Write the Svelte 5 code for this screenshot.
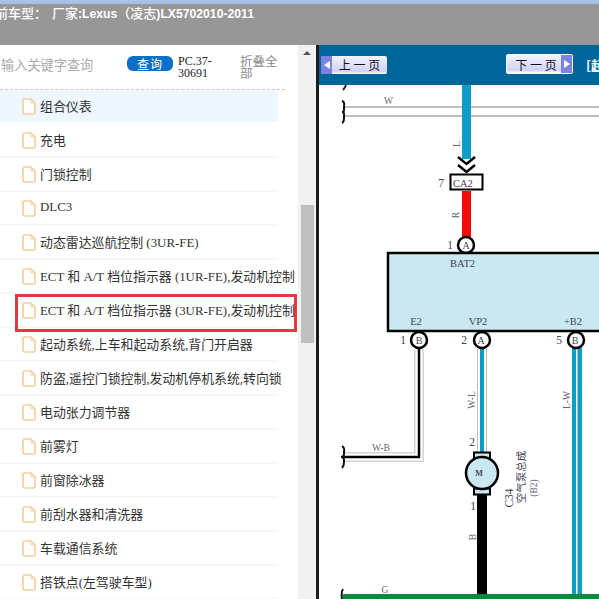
<script>
  const rows = [
    '组合仪表', '充电', '门锁控制', 'DLC3', '动态雷达巡航控制 (3UR-FE)',
    'ECT 和 A/T 档位指示器 (1UR-FE),发动机控制', 'ECT 和 A/T 档位指示器 (3UR-FE),发动机控制',
    '起动系统,上车和起动系统,背门开启器', '防盗,遥控门锁控制,发动机停机系统,转向锁',
    '电动张力调节器', '前雾灯', '前窗除冰器', '前刮水器和清洗器', '车载通信系统', '搭铁点(左驾驶车型)'
  ];
</script>

<div class="page">
  <header class="top">
    <div class="title"><span class="c">前车型：</span><span class="gap"></span><span class="c">厂家</span>:Lexus<span class="c">（凌志</span>)LX5702010-2011</div>
  </header>
  <div class="main">
    <aside class="left">
      <div class="search">
        <span class="kw">输入关键字查询</span>
        <span class="btn">查询</span>
        <span class="code">PC.37-30691</span>
        <span class="fold">折叠全部</span>
      </div>
      <ul class="list">
        {#each rows as r, i}
          <li class:active={i === 0} class:marked={i === 6}>
            <svg class="doc" width="14" height="17" viewBox="0 0 14 17">
              <path d="M1 2.500a1.500 1.500 0 0 1 1.500-1.500h6.500l4 4v9.500a1.500 1.500 0 0 1-1.500 1.500h-9a1.500 1.500 0 0 1-1.500-1.500z" fill="#fff" stroke="#f2cfa0" stroke-width="1.700"/>
              <path d="M9 1v4h4" fill="none" stroke="#f2cfa0" stroke-width="1"/>
            </svg>
            <span class="label">{r}</span>
          </li>
        {/each}
      </ul>
    </aside>
    <div class="scroll">
      <div class="arrow"></div>
      <div class="thumb"></div>
    </div>
    <section class="right">
      <div class="nav">
        <div class="pg prev"><span class="tip"><i class="l"></i></span><span class="t">上 一 页</span></div>
        <div class="pg next"><span class="t">下 一 页</span><span class="tip"><i class="r"></i></span></div>
        <span class="us"></span>
        <span class="cut">[起</span>
      </div>
      <svg class="dia" width="280" height="514" viewBox="319 85 280 514">
        <g fill="none">
          <path d="M346 85q-1 3-3 5" stroke="#222" stroke-width="2"/>
          <path d="M343 107H599M343 116H599" stroke="#a9a9a9" stroke-width="1.500"/>
          <path d="M342 101q3 1 2 5v4q0 2-2 2q2 0 2 2v4q0 4-2 5" stroke="#111" stroke-width="2"/>
          <rect x="462" y="85" width="9" height="74" fill="#0e9dc6"/>
          <path d="M458 157l8.500 7l8.500-7M458 165l8.500 7l8.500-7" stroke="#000" stroke-width="2.500"/>
          <rect x="450.500" y="174.500" width="32" height="15" fill="#fff" stroke="#000" stroke-width="2"/>
          <rect x="462" y="191" width="9" height="46" fill="#f00c0c"/>
          <circle cx="466" cy="245" r="8" fill="#fff" stroke="#000" stroke-width="2.500"/>
          <rect x="388" y="253" width="220" height="78" fill="#c9e8f1" stroke="#000" stroke-width="2.500"/>

          <path d="M419 349V457H343" stroke="#a8a8a8" stroke-width="9"/>
          <path d="M419 349V457H343" stroke="#fff" stroke-width="7.500"/>
          <path d="M419 349V457H343" stroke="#000" stroke-width="2.500"/>
          <path d="M342 446q3 2 2 6v2q0 3-3 3q3 0 3 3v2q0 4-2 6" stroke="#111" stroke-width="2"/>

          <path d="M482 349V453" stroke="#a8a8a8" stroke-width="10"/>
          <path d="M482 349V453" stroke="#fff" stroke-width="8.500"/>
          <path d="M482 349V453" stroke="#0e9dc6" stroke-width="4"/>

          <rect x="477" y="495" width="10" height="100" fill="#000"/>
          <rect x="572" y="347" width="10" height="252" fill="#0e9dc6"/>
          <rect x="576" y="347" width="1.500" height="252" fill="#fff"/>
          <rect x="343" y="594" width="256" height="5" fill="#0b8a3e"/>
          <path d="M343 589q-2 3-1 10" stroke="#111" stroke-width="2"/>

          <circle cx="419" cy="340" r="8" fill="#fff" stroke="#000" stroke-width="2.500"/>
          <circle cx="482" cy="340" r="8" fill="#fff" stroke="#000" stroke-width="2.500"/>
          <circle cx="576" cy="340" r="8" fill="#fff" stroke="#000" stroke-width="2.500"/>

          <rect x="474" y="452.500" width="16" height="6" fill="#c9e8f1" stroke="#000" stroke-width="2"/>
          <rect x="474" y="488.500" width="16" height="6" fill="#c9e8f1" stroke="#000" stroke-width="2"/>
          <circle cx="482" cy="473" r="16" fill="#c9e8f1" stroke="#000" stroke-width="2.500"/>
        </g>
        <g class="sch">
          <text x="384" y="104" class="s">W</text>
          <text x="441" y="187" text-anchor="middle" class="n">7</text>
          <text x="453" y="187">CA2</text>
          <text x="450" y="249" text-anchor="middle" class="n">1</text>
          <text x="466" y="249" text-anchor="middle" class="m">A</text>
          <text x="450" y="267">BAT2</text>
          <text x="416" y="325" text-anchor="middle">E2</text>
          <text x="478" y="325" text-anchor="middle">VP2</text>
          <text x="573" y="325" text-anchor="middle">+B2</text>
          <text x="403" y="344" text-anchor="middle" class="n">1</text>
          <text x="464" y="344" text-anchor="middle" class="n">2</text>
          <text x="559" y="344" text-anchor="middle" class="n">5</text>
          <text x="419" y="344" text-anchor="middle" class="m">B</text>
          <text x="481" y="344" text-anchor="middle" class="m">A</text>
          <text x="575" y="344" text-anchor="middle" class="m">B</text>
          <text x="381" y="451" text-anchor="middle" class="s">W-B</text>
          <text x="472" y="446" text-anchor="middle" class="n">2</text>
          <text x="473" y="510" text-anchor="middle" class="n">1</text>
          <text x="479" y="476" text-anchor="middle" class="xs">M</text>
          <text x="385" y="593" text-anchor="middle" class="s">G</text>
          <text transform="translate(460 144) rotate(-90)" text-anchor="middle" class="s">L</text>
          <text transform="translate(459 215) rotate(-90)" text-anchor="middle" class="s">R</text>
          <text transform="translate(475 400) rotate(-90)" text-anchor="middle" class="s">W-L</text>
          <text transform="translate(570 400) rotate(-90)" text-anchor="middle" class="s">L-W</text>
          <text transform="translate(476 537) rotate(-90)" text-anchor="middle" class="s">B</text>
          <text transform="translate(513 498) rotate(-90)" text-anchor="middle" class="n">C34</text>
          <text transform="translate(525 477) rotate(-90)" text-anchor="middle" class="cn">空气泵总成</text>
          <text transform="translate(537 488) rotate(-90)" text-anchor="middle" class="s">(B2)</text>
        </g>
      </svg>
    </section>
  </div>
</div>

<style>
  :global(body) { margin: 0; }
  .page {
    width: 599px;
    height: 599px;
    overflow: hidden;
    display: flex;
    flex-direction: column;
    font-family: "Liberation Serif", "Noto Sans CJK SC", serif;
    background: #fff;
  }
  .top {
    height: 45px;
    flex: none;
    box-sizing: border-box;
    background: linear-gradient(#979797, #979797) 0 4px no-repeat, linear-gradient(#a9c3ea, #5b82cc);
  }
  .title {
    margin-left: -5px;
    padding-top: 5px;
    font: bold 12.200px/17px "Liberation Sans", "Noto Sans CJK SC", sans-serif;
    color: #fff;
    white-space: nowrap;
  }
  .title .c { font-size: 13px; font-weight: 500; }
  .gap { display: inline-block; width: 5px; }
  .main { flex: 1; display: flex; min-height: 0; }
  .left { width: 298px; flex: none; overflow: hidden; background: #fff; }
  .search {
    height: 44px;
    margin-right: 13px;
    border-bottom: 1px dashed #ccc;
    display: flex;
    align-items: center;
    box-sizing: content-box;
  }
  .kw { width: 127px; flex: none; padding-left: 1px; margin-bottom: 6px; box-sizing: border-box; font: 13.200px "Noto Sans CJK SC", sans-serif; color: #aaa; }
  .btn {
    width: 46px;
    height: 15px;
    margin-bottom: 7px;
    flex: none;
    border-radius: 6px;
    background: #0a70c9;
    color: #fff;
    font: 12px/15px "Noto Sans CJK SC", sans-serif;
    text-align: center;
    letter-spacing: 1px;
  }
  .code { width: 44px; margin-left: 5px; flex: none; font-size: 12px; line-height: 12px; color: #222; }
  .fold { width: 38px; margin-left: 18px; flex: none; font: 12.500px/12px "Noto Sans CJK SC", sans-serif; color: #8a8a8a; }
  .list { list-style: none; margin: 0; padding: 0; }
  li {
    position: relative;
    width: 278px;
    height: 34px;
    box-sizing: border-box;
    border-bottom: 2px solid #f6f6f6;
    display: flex;
    align-items: center;
    padding-left: 22px;
    white-space: nowrap;
  }
  li.active { background: #eef7fd; border-bottom-color: #fff; }
  li.marked::after {
    content: "";
    position: absolute;
    left: 15px;
    top: 0;
    width: 282px;
    height: 38px;
    box-sizing: border-box;
    border: 3px solid #e0393e;
  }
  .doc { flex: none; }
  .label { margin-left: 4px; margin-bottom: 1px; font-size: 12.900px; color: #333; }
  .scroll {
    width: 18px;
    flex: none;
    background: #f1f1f1;
    display: flex;
    flex-direction: column;
    align-items: center;
  }
  .arrow {
    margin-top: 6px;
    width: 0;
    height: 0;
    border-left: 4px solid transparent;
    border-right: 4px solid transparent;
    border-bottom: 4px solid #555;
  }
  .thumb { margin-top: 150px; width: 13px; height: 138px; background: #c0c0c0; }
  .right { flex: 1; min-width: 0; border-left: 3px solid #1c1c1c; display: flex; flex-direction: column; }
  .nav {
    height: 40px;
    flex: none;
    background: #006699;
    display: flex;
    align-items: center;
    white-space: nowrap;
    overflow: hidden;
  }
  .pg {
    height: 18px;
    display: flex;
    align-items: center;
    background: linear-gradient(#f2f3ff, #d0d3f6 85%, #fff);
    color: #111;
    font: 12px "Noto Sans CJK SC", sans-serif;
    border-radius: 2px;
    box-sizing: border-box;
    flex: none;
  }
  .prev { width: 66px; margin-left: 2px; margin-top: -1px; }
  .next { width: 67px; height: 20px; margin-left: 119px; margin-top: -2px; border: 1px solid #fff; }
  .t { flex: 1; text-align: center; }
  .next .t { padding-left: 4px; }
  .tip { width: 11px; align-self: stretch; background: #7a82e2; display: flex; align-items: center; justify-content: center; }
  .tip i { width: 0; height: 0; border-top: 4px solid transparent; border-bottom: 4px solid transparent; }
  .tip .l { border-right: 6px solid #fff; }
  .tip .r { border-left: 6px solid #fff; }
  .us { width: 5px; height: 1px; background: #fff; margin-top: 14px; margin-left: 1px; }
  .cut { margin-left: 12px; margin-top: -2px; font: bold 13px "Noto Sans CJK SC", sans-serif; color: #fff; text-decoration: underline; }
  .dia { display: block; flex: 1; background: #fff; }
  .sch text { font: 10.500px "Liberation Serif", serif; fill: #445; }
  .sch text.s { font-size: 9.500px; fill: #667; }
  .sch text.m { font-size: 10px; }
  .sch text.n { font-size: 11.500px; }
  .sch text.xs { font-size: 8px; font-weight: bold; }
  .sch text.cn { font: 10.500px "Noto Sans CJK SC", sans-serif; fill: #445; }
</style>
